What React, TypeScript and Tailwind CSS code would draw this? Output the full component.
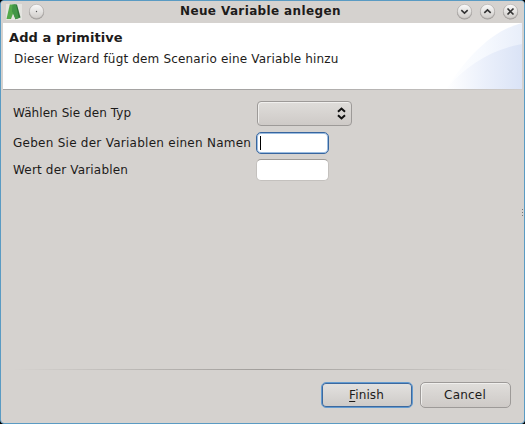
import type { ReactNode } from "react";

function TitleButton({ children }: { children: ReactNode }) {
  return (
    <svg width="17" height="17" viewBox="0 0 17 17" className="shrink-0">
      <defs>
        <linearGradient id="knob" x1="0" y1="0" x2="0" y2="1">
          <stop offset="0" stopColor="#fafafa" />
          <stop offset="1" stopColor="#cfccc9" />
        </linearGradient>
      </defs>
      <circle cx="8.5" cy="9" r="7.6" fill="#8f8c89" opacity="0.75" />
      <circle cx="8.5" cy="8.4" r="7.1" fill="url(#knob)" stroke="#aaa7a4" strokeWidth="0.5" />
      {children}
    </svg>
  );
}

function AppIcon() {
  return (
    <svg width="16" height="16" viewBox="0 0 16 16" className="shrink-0">
      <rect width="16" height="16" fill="#e4e4e0" />
      <path d="M3.8 0.5 L8.5 0.5 L8 7 L5 15 L0.5 15 Z" fill="#55a94b" />
      <path d="M8 0.5 L11 0.5 L14.5 13.5 L9.5 15.3 L6.5 7 Z" fill="#2d7336" />
      <path d="M6.5 0.5 L10 0.5 L12.8 14 L9.5 15.3 L6 7 Z" fill="#429646" />
    </svg>
  );
}

function TitleBar() {
  return (
    <header className="flex h-[22px] items-start bg-[#d5d2cf] pl-[5px] pr-[5px] pt-[2px]">
      <div className="flex w-[80px] gap-[6px]">
        <div className="pt-px"><AppIcon /></div>
        <TitleButton><circle cx="8.5" cy="8.5" r="0.7" fill="#555" /></TitleButton>
      </div>
      <h1 className="flex-1 whitespace-nowrap pl-[94px] pt-px text-[12px] font-bold leading-[14px] tracking-[0.37px]">Neue Variable anlegen</h1>
      <div className="flex gap-[6px]">
        <TitleButton><path d="M5.3 7.2 L8.5 10.2 L11.7 7.2" fill="none" stroke="#333" strokeWidth="1.6" /></TitleButton>
        <TitleButton><path d="M5.3 9.8 L8.5 6.8 L11.7 9.8" fill="none" stroke="#333" strokeWidth="1.6" /></TitleButton>
        <TitleButton><path d="M5.5 5.5 L11.5 11.5 M11.5 5.5 L5.5 11.5" fill="none" stroke="#333" strokeWidth="1.6" /></TitleButton>
      </div>
    </header>
  );
}

function Banner() {
  return (
    <section className="mx-[2px] h-[67px]">
      <div className="flex h-[66px] justify-between bg-white">
        <div className="whitespace-nowrap pl-[6px] pt-[6px]">
          <h2 className="text-[13px] font-bold leading-[17px] tracking-[0.07px]">Add a primitive</h2>
          <p className="pl-[5px] pt-[5px] text-[12px] leading-[16px] tracking-[0.17px]">Dieser Wizard fügt dem Scenario eine Variable hinzu</p>
        </div>
        <svg width="76" height="66" viewBox="0 0 76 66" className="shrink-0">
          <defs>
            <linearGradient id="outer" x1="0" y1="0" x2="1" y2="0">
              <stop offset="0" stopColor="#fff" />
              <stop offset="0.5" stopColor="#f6f9fe" />
              <stop offset="1" stopColor="#e8eefa" />
            </linearGradient>
            <linearGradient id="inner" x1="0" y1="0" x2="1" y2="0">
              <stop offset="0" stopColor="#fff" />
              <stop offset="0.5" stopColor="#ebf0fb" />
              <stop offset="1" stopColor="#dae3f6" />
            </linearGradient>
          </defs>
          <path d="M0 66 C20 36 44 8 76 0 V66 Z" fill="url(#outer)" />
          <path d="M0 66 C20 42 47 26 76 21 V66 Z" fill="url(#inner)" />
        </svg>
      </div>
      <div className="h-px bg-linear-to-r from-[#a5a3a2] from-50% to-[#cfccca]" />
    </section>
  );
}

function FormArea() {
  return (
    <main className="flex h-[279px] flex-col pl-[12px] pt-[11px]">
      <div className="flex h-[25px] items-center">
        <label className="w-[244px] pb-[2px] text-[12px] leading-[16px] tracking-[0.07px]">Wählen Sie den Typ</label>
        <button aria-label="Typ" className="flex h-[25px] w-[95px] items-center justify-end rounded-[4px] border border-[#9d9a98] bg-linear-to-b from-[#dfddda] to-[#cecac7] pr-[5px] shadow-[inset_1px_1px_0_#f0efed]">
          <svg width="9" height="13" viewBox="0 0 9 13">
            <path d="M1 4.8 L4.5 1.5 L8 4.8 M1 8.2 L4.5 11.5 L8 8.2" fill="none" stroke="#111" strokeWidth="2" />
          </svg>
        </button>
      </div>
      <div className="mt-[6px] flex h-[22px] items-center">
        <label className="w-[243px] whitespace-nowrap text-[12px] leading-[16px] tracking-[0.26px]">Geben Sie der Variablen einen Namen</label>
        <div className="flex h-[22px] w-[73px] items-center rounded-[5px] border border-[#37659e] bg-white pl-[3px] shadow-[inset_0_0_0_1px_#9bbce0]">
          <span className="h-[14px] w-px bg-black" />
        </div>
      </div>
      <div className="mt-[5px] flex h-[22px] items-center">
        <label className="w-[243px] text-[12px] leading-[16px] tracking-[0.17px]">Wert der Variablen</label>
        <div className="h-[22px] w-[73px] rounded-[5px] border border-[#c4c1be] border-t-[#9e9b98] bg-white" />
      </div>
    </main>
  );
}

export default function App() {
  return (
    <div className="h-[424px] w-[525px] bg-black font-['DejaVu_Sans',sans-serif] text-[#1d1b1a]">
      <div className="relative flex h-[424px] flex-col overflow-hidden rounded-[4px] border border-[#5a9bc3] bg-[#d5d2cf]">
        <TitleBar />
        <Banner />
        <FormArea />
        <div className="mx-[12px] h-px shrink-0 bg-linear-to-r from-transparent via-[#a19e9b] to-transparent" />
        <footer className="flex gap-[7px] pl-[320px] pt-[12px] text-[12px]">
          <button className="h-[26px] w-[92px] rounded-[5px] border border-[#639bd0] bg-linear-to-b from-[#e4e2e0] to-[#cdcac7] pr-px leading-[22px] tracking-[0.1px] shadow-[inset_0_0_0_1px_#3c699f]">
            <span className="underline underline-offset-2">F</span>inish
          </button>
          <button className="h-[26px] w-[91px] rounded-[5px] border border-[#9d9a98] bg-linear-to-b from-[#e0dedb] to-[#cecac7] pr-px leading-[22px] tracking-[0.2px] shadow-[inset_1px_1px_0_#f0efed]">Cancel</button>
        </footer>
        <div className="absolute right-0 top-[208px] flex w-[2px] flex-col gap-[2px]">
          <i className="h-px w-px bg-[#777]" /><i className="h-px w-px bg-[#777]" /><i className="h-px w-px bg-[#777]" />
        </div>
      </div>
    </div>
  );
}
